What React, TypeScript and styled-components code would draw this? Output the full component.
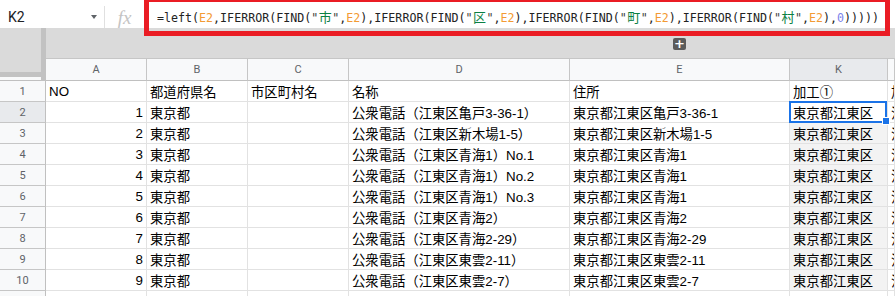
import React from 'react';
import styled, { createGlobalStyle } from 'styled-components';

const Global = createGlobalStyle`
  html, body { margin: 0; padding: 0; background: #fff; overflow: hidden; }
  body { font-family: "Liberation Sans", Arial, "Noto Sans CJK JP", sans-serif; }
`;

const Page = styled.div`
  position: relative;
  width: 895px;
  height: 296px;
  overflow: hidden;
  background: #fff;
`;

const FormulaBar = styled.div`
  display: flex;
  align-items: center;
  height: 28px;
  padding-top: 6px;
  box-sizing: border-box;
  background: #fff;
`;

const NameBox = styled.div`
  width: 104px;
  display: flex;
  align-items: center;
  justify-content: space-between;
  padding: 0 7px 0 8px;
  box-sizing: border-box;
  font-family: Roboto, "Liberation Sans", sans-serif;
  font-size: 14px;
  color: #202124;
`;

const Caret = styled.span`
  width: 0;
  height: 0;
  border-left: 3.5px solid transparent;
  border-right: 3.5px solid transparent;
  border-top: 4px solid #5f6368;
`;

const Divider = styled.div`
  width: 1px;
  height: 22px;
  background: #e0e0e0;
`;

const Fx = styled.div`
  width: 39px;
  text-align: center;
  font-family: "Liberation Serif", serif;
  font-style: italic;
  font-size: 19px;
  color: #c4c4c4;
  line-height: 1;
`;

const Formula = styled.div`
  flex: 1;
  padding-left: 13px;
  font-family: "DejaVu Sans Mono", "Liberation Mono", monospace;
  font-size: 11.65px;
  color: #222;
  white-space: nowrap;
`;

const Tok = styled.span<{ $c: string }>`
  color: ${(p) => p.$c};
`;

const Cjk = styled.span`
  display: inline-block;
  width: 14px;
  text-align: center;
  font-family: "Noto Sans CJK JP", sans-serif;
  font-size: 13px;
  color: #0b8043;
  line-height: 1;
`;

const Annotation = styled.div`
  position: absolute;
  left: 144px;
  top: -3px;
  width: 746px;
  height: 39px;
  box-sizing: border-box;
  border: 5px solid #ea1c24;
  pointer-events: none;
`;

const Band = styled.div`
  height: 30px;
  display: flex;
  background: #dadada;
`;

const BandLeft = styled.div`
  width: 41px;
`;

const FreezeBar = styled.div`
  width: 5px;
  background: #c2c2c2;
`;

const BandRest = styled.div`
  flex: 1;
  padding: 10px 0 0 627px;
`;

const PlusButton = styled.div`
  width: 13px;
  height: 12px;
  border-radius: 2px;
  background: #5b5b5b;
  color: #fff;
  font-family: "DejaVu Sans", sans-serif;
  font-size: 13px;
  font-weight: bold;
  line-height: 12px;
  text-align: center;
`;

const Sheet = styled.div`
  display: grid;
  grid-template-columns: 46px 101px 101px 101px 221px 220px 98px minmax(0, 1fr);
  grid-template-rows: 23px;
  grid-auto-rows: 21px;
`;

const Corner = styled.div`
  border-right: 5px solid #c2c2c2;
  background: linear-gradient(to bottom, #dadada 0 14px, #c2c2c2 14px 19px, #f8f9fa 19px 22px, #c0c0c0 22px);
`;

const ColHeader = styled.div<{ $active?: boolean }>`
  display: flex;
  align-items: center;
  justify-content: center;
  border-top: 1px solid #c6c6c6;
  border-right: 1px solid #c6c6c6;
  border-bottom: 1px solid #c0c0c0;
  box-sizing: border-box;
  background: ${(p) => (p.$active ? '#e8eaed' : '#f8f9fa')};
  font-family: Roboto, "Liberation Sans", sans-serif;
  font-size: 11px;
  color: #5f6368;
`;

const RowHeader = styled.div<{ $active?: boolean }>`
  display: flex;
  align-items: center;
  justify-content: center;
  border-right: 1px solid #c0c0c0;
  border-bottom: 1px solid #c6c6c6;
  box-sizing: border-box;
  background: ${(p) => (p.$active ? '#e8eaed' : '#f8f9fa')};
  font-family: Roboto, "Liberation Sans", sans-serif;
  font-size: 11px;
  color: #5f6368;
`;

const Cell = styled.div<{ $num?: boolean; $fill?: boolean; $selected?: boolean }>`
  position: relative;
  display: flex;
  align-items: center;
  justify-content: ${(p) => (p.$num ? 'flex-end' : 'flex-start')};
  padding: 1px 3px 0;
  box-sizing: border-box;
  min-width: 0;
  border-right: 1px solid #e2e2e2;
  border-bottom: 1px solid #e2e2e2;
  background: ${(p) => (p.$fill ? '#f3f3f3' : '#fff')};
  font-size: 13.33px;
  color: #000;
  white-space: nowrap;
  overflow: ${(p) => (p.$selected ? 'visible' : 'hidden')};
  z-index: ${(p) => (p.$selected ? 2 : 'auto')};
`;

const SelectionBox = styled.div`
  position: absolute;
  left: -1px;
  top: -1px;
  right: 0;
  bottom: -1px;
  border: 2px solid #1a73e8;
  pointer-events: none;
`;

const FillHandle = styled.div`
  position: absolute;
  right: -5px;
  bottom: -4px;
  width: 6px;
  height: 6px;
  background: #1a73e8;
  border: 1px solid #fff;
`;

const OR = '#f39a33';
const BK = '#222';
const STR = '#3c3c3c';
const NUM = '#7b83eb';

const Paren = ({ d, ch }: { d: number; ch: string }) => {
  const colors = ['#222', '#8e5fd0', '#4a8ee0', '#8e5fd0', '#4a8ee0', '#8e5fd0'];
  return <Tok $c={colors[d] || BK}>{ch}</Tok>;
};

const Find = ({ ch }: { ch: string }) => (
  <>
    <Tok $c={BK}>IFERROR</Tok>
    <Tok $c={BK}>(</Tok>
    <Tok $c={BK}>FIND(</Tok>
    <Tok $c={STR}>"</Tok>
    <Cjk>{ch}</Cjk>
    <Tok $c={STR}>"</Tok>
    <Tok $c={BK}>,</Tok>
    <Tok $c={OR}>E2</Tok>
    <Tok $c={BK}>),</Tok>
  </>
);

type Row = { n: number; a: string; b: string; c: string; d: string; e: string; k: string; l: string };

const rows: Row[] = [
  { n: 1, a: 'NO', b: '都道府県名', c: '市区町村名', d: '名称', e: '住所', k: '加工①', l: '加工②' },
  { n: 2, a: '1', b: '東京都', c: '', d: '公衆電話（江東区亀戸3-36-1）', e: '東京都江東区亀戸3-36-1', k: '東京都江東区', l: '江東区' },
  { n: 3, a: '2', b: '東京都', c: '', d: '公衆電話（江東区新木場1-5）', e: '東京都江東区新木場1-5', k: '東京都江東区', l: '江東区' },
  { n: 4, a: '3', b: '東京都', c: '', d: '公衆電話（江東区青海1）No.1', e: '東京都江東区青海1', k: '東京都江東区', l: '江東区' },
  { n: 5, a: '4', b: '東京都', c: '', d: '公衆電話（江東区青海1）No.2', e: '東京都江東区青海1', k: '東京都江東区', l: '江東区' },
  { n: 6, a: '5', b: '東京都', c: '', d: '公衆電話（江東区青海1）No.3', e: '東京都江東区青海1', k: '東京都江東区', l: '江東区' },
  { n: 7, a: '6', b: '東京都', c: '', d: '公衆電話（江東区青海2）', e: '東京都江東区青海2', k: '東京都江東区', l: '江東区' },
  { n: 8, a: '7', b: '東京都', c: '', d: '公衆電話（江東区青海2-29）', e: '東京都江東区青海2-29', k: '東京都江東区', l: '江東区' },
  { n: 9, a: '8', b: '東京都', c: '', d: '公衆電話（江東区東雲2-11）', e: '東京都江東区東雲2-11', k: '東京都江東区', l: '江東区' },
  { n: 10, a: '9', b: '東京都', c: '', d: '公衆電話（江東区東雲2-7）', e: '東京都江東区東雲2-7', k: '東京都江東区', l: '江東区' },
  { n: 11, a: '', b: '', c: '', d: '', e: '', k: '', l: '' },
];

const cols = ['A', 'B', 'C', 'D', 'E', 'K', ''];

export default function App() {
  return (
    <Page>
      <Global />
      <FormulaBar>
        <NameBox>
          <span>K2</span>
          <Caret />
        </NameBox>
        <Divider />
        <Fx>fx</Fx>
        <Formula>
          <Tok $c={BK}>=left</Tok>
          <Paren d={0} ch="(" />
          <Tok $c={OR}>E2</Tok>
          <Tok $c={BK}>,</Tok>
          <Find ch="市" />
          <Find ch="区" />
          <Find ch="町" />
          <Tok $c={BK}>IFERROR</Tok>
          <Tok $c={BK}>(</Tok>
          <Tok $c={BK}>FIND(</Tok>
          <Tok $c={STR}>"</Tok>
          <Cjk>村</Cjk>
          <Tok $c={STR}>"</Tok>
          <Tok $c={BK}>,</Tok>
          <Tok $c={OR}>E2</Tok>
          <Tok $c={BK}>),</Tok>
          <Tok $c={NUM}>0</Tok>
          <Tok $c={BK}>)))))</Tok>
        </Formula>
      </FormulaBar>
      <Band>
        <BandLeft />
        <FreezeBar />
        <BandRest>
          <PlusButton>+</PlusButton>
        </BandRest>
      </Band>
      <Sheet>
        <Corner />
        {cols.map((c, i) => (
          <ColHeader key={i} $active={c === 'K'}>
            {c}
          </ColHeader>
        ))}
        {rows.map((r) => (
          <React.Fragment key={r.n}>
            <RowHeader $active={r.n === 2}>{r.n}</RowHeader>
            <Cell $num={r.n > 1}>{r.a}</Cell>
            <Cell>{r.b}</Cell>
            <Cell>{r.c}</Cell>
            <Cell>{r.d}</Cell>
            <Cell>{r.e}</Cell>
            <Cell $fill={r.n > 2 && r.n < 11} $selected={r.n === 2}>
              {r.k}
              {r.n === 2 && (
                <SelectionBox>
                  <FillHandle />
                </SelectionBox>
              )}
            </Cell>
            <Cell>{r.l}</Cell>
          </React.Fragment>
        ))}
      </Sheet>
      <Annotation />
    </Page>
  );
}
